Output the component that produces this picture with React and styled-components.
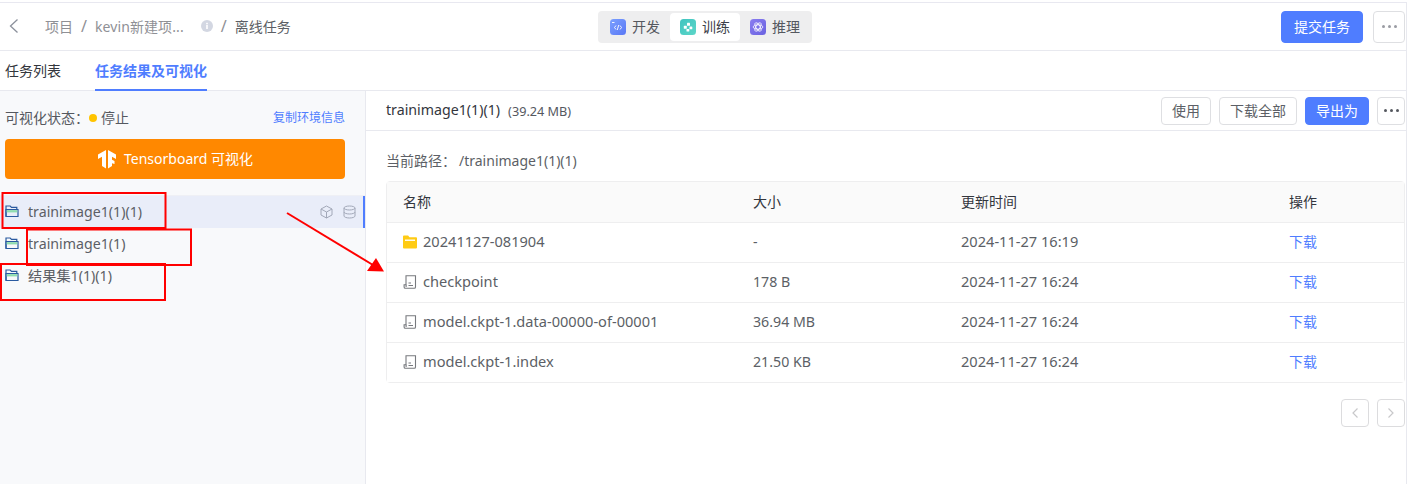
import React from "react";
import styled, { createGlobalStyle } from "styled-components";

const Global = createGlobalStyle`
  html, body { margin: 0; padding: 0; background: #fff; overflow: hidden; }
  body { font-family: "Noto Sans", "Noto Sans CJK SC", sans-serif; font-size: 14px; color: #5c5f66; }
  * { box-sizing: border-box; }
`;

const Page = styled.div`
  position: relative;
  width: 1409px;
  height: 484px;
  padding-top: 2px;
  overflow: hidden;
`;
const Frame = styled.div`
  width: 1407px;
  height: 482px;
  border-top: 1px solid #e8e8f0;
  border-right: 1px solid #e8e9ef;
  display: flex;
  flex-direction: column;
`;
const TopBar = styled.header`
  height: 48px;
  flex: none;
  border-bottom: 1px solid #e8e9ef;
  display: flex;
  align-items: center;
`;
const Crumbs = styled.nav`
  width: 598px;
  flex: none;
  display: flex;
  align-items: center;
  font-size: 14px;
  padding: 0 0 2px 8px;
`;
const BackBtn = styled.span`
  display: flex;
  width: 37px;
  color: #8c919c;
`;
const Crumb = styled.span`
  color: ${(p) => (p.$current ? "#5c5f66" : "#8f9095")};
  white-space: nowrap;
  letter-spacing: ${(p) => (p.$wide ? "0.1px" : "0")};
`;
const Sep = styled.span`
  color: #8f9095;
  margin: 0 8px;
  font-size: 16px;
  line-height: 1;
`;
const Info = styled.span`
  display: flex;
  margin-left: 17px;
`;
const Segments = styled.div`
  display: flex;
  align-items: center;
  height: 32px;
  padding: 2px;
  background: #eeeeef;
  border-radius: 4px;
  width: 214px;
  flex: none;
`;
const Segment = styled.div`
  display: flex;
  align-items: center;
  gap: 6px;
  height: 28px;
  width: 70px;
  padding: 0 0 2px 10px;
  border-radius: 4px;
  background: ${(p) => (p.$active ? "#fff" : "transparent")};
  color: ${(p) => (p.$active ? "#3c4048" : "#55585f")};
  font-size: 14px;
  white-space: nowrap;
  & > svg { position: relative; top: 1px; }
`;
const TopActions = styled.div`
  flex: 1;
  display: flex;
  justify-content: flex-end;
  align-items: center;
  gap: 10px;
  padding-right: 1px;
`;
const Btn = styled.button`
  font: inherit;
  font-size: 14px;
  height: ${(p) => (p.$h ? p.$h : 28)}px;
  padding: 0 0 2px;
  width: ${(p) => p.$w}px;
  border-radius: 4px;
  border: 1px solid ${(p) => (p.$primary ? "#4f7dff" : "#dedfe2")};
  background: ${(p) => (p.$primary ? "#4f7dff" : "#fff")};
  color: ${(p) => (p.$primary ? "#fff" : "#5c5f66")};
  display: flex;
  align-items: center;
  justify-content: center;
  white-space: nowrap;
  flex: none;
`;
const Dots = styled.span`
  display: flex;
  gap: 3px;
  position: relative;
  top: 1px;
  & > i {
    width: 3px;
    height: 3px;
    border-radius: 50%;
    background: ${(p) => p.$c};
    display: block;
  }
`;
const Tabs = styled.div`
  height: 40px;
  flex: none;
  border-bottom: 1px solid #e8e9ef;
  display: flex;
  gap: 34px;
  padding-left: 5px;
`;
const Tab = styled.div`
  height: 40px;
  line-height: 40px;
  font-size: 14px;
  font-weight: ${(p) => (p.$active ? 700 : 400)};
  color: ${(p) => (p.$active ? "#4f7dff" : "#33363d")};
  border-bottom: 2px solid ${(p) => (p.$active ? "#4f7dff" : "transparent")};
  white-space: nowrap;
`;
const Body = styled.div`
  flex: 1;
  display: flex;
  min-height: 0;
`;
const Side = styled.aside`
  width: 366px;
  flex: none;
  background: #f8f9fb;
  border-right: 1px solid #e8e9ef;
`;
const StatusRow = styled.div`
  display: flex;
  align-items: center;
  height: 48px;
  padding: 4px 20px 0 5px;
  font-size: 14px;
  color: #55585f;
`;
const Dot = styled.i`
  width: 8px;
  height: 8px;
  border-radius: 50%;
  background: #ffc400;
  margin: 1px 4px 0 0;
`;
const CopyLink = styled.span`
  margin-left: auto;
  font-size: 12px;
  color: #4f7dff;
`;
const TbButton = styled.div`
  margin: 0 20px 0 5px;
  height: 40px;
  padding-bottom: 2px;
  border-radius: 4px;
  background: #ff8800;
  color: #fff;
  font-size: 14px;
  display: flex;
  align-items: center;
  justify-content: center;
  gap: 7px;
  & > svg { position: relative; top: 1px; }
`;
const Tree = styled.div`
  margin-top: 17px;
`;
const TreeRow = styled.div`
  height: 32px;
  display: flex;
  align-items: center;
  gap: 9px;
  padding: 0 7px 2px 5px;
  font-size: 14.2px;
  background: ${(p) => (p.$active ? "#e9edf9" : "transparent")};
  border-right: 2px solid ${(p) => (p.$active ? "#4f7dff" : "transparent")};
  box-shadow: ${(p) => (p.$active ? "0 -1px 0 #eff0f5" : "none")};
  color: #5c5f66;
`;
const RowTools = styled.span`
  margin-left: auto;
  display: flex;
  gap: 10px;
  color: #a2a8b8;
  position: relative;
  top: 1px;
`;
const Main = styled.main`
  flex: 1;
  min-width: 0;
  display: flex;
  flex-direction: column;
`;
const MainHead = styled.div`
  height: 40px;
  flex: none;
  border-bottom: 1px solid #e8e9ef;
  display: flex;
  align-items: center;
  padding: 0 1px 0 20px;
`;
const Title = styled.span`
  font-size: 14.2px;
  color: #33363d;
  margin-bottom: 2px;
`;
const Size = styled.span`
  font-size: 12.700px;
  color: #55585f;
  margin: 0 0 0 8px;
`;
const HeadActions = styled.div`
  margin-left: auto;
  display: flex;
  gap: 8px;
`;
const PathLine = styled.div`
  font-size: 14px;
  color: #5c5f66;
  padding: 19px 0 0 20px;
  height: 50px;
`;
const PathValue = styled.span`
  margin-left: 3px;
`;
const Table = styled.div`
  margin: 0 1px 0 20px;
  border: 1px solid #eeeeef;
  border-radius: 4px;
`;
const TRow = styled.div`
  display: grid;
  grid-template-columns: 350px 208px 328px 1fr;
  height: 40px;
  align-items: center;
  padding: 0 0 ${(p) => (p.$head ? 2 : 3)}px 16px;
  font-size: ${(p) => (p.$head ? "14px" : "14.6px")};
  background: ${(p) => (p.$head ? "#fafafa" : "#fff")};
  color: ${(p) => (p.$head ? "#33363d" : "#5c5f66")};
  border-top: ${(p) => (p.$head ? "0" : "1px solid #eeeeef")};
`;
const NameCell = styled.span`
  display: flex;
  align-items: center;
  gap: 6px;
  white-space: nowrap;
  & > svg { position: relative; top: 1px; }
`;
const SizeCell = styled.span`
  font-size: 14.2px;
`;
const Link = styled.span`
  color: #4f7dff;
  font-size: 14px;
`;
const Pager = styled.div`
  display: flex;
  justify-content: flex-end;
  gap: 8px;
  padding: 16px 1px 0 0;
`;
const PageBtn = styled.span`
  width: 28px;
  height: 28px;
  border: 1px solid #dcdcde;
  border-radius: 4px;
  display: flex;
  align-items: center;
  justify-content: center;
  color: #c8c8ca;
`;
const Overlay = styled.svg`
  position: absolute;
  left: 0;
  top: 0;
  pointer-events: none;
`;

const FolderOpen = () => (
  <svg width="14" height="14" viewBox="0 0 14 14" fill="none">
    <path d="M1 12.500V2h4.200l1.300 1.400h5.300V5.500" stroke="#2a5aa0" strokeWidth="1.200" />
    <path d="M1 5.500h12v7H1z" stroke="#2a5aa0" strokeWidth="1.200" />
    <rect x="1.700" y="6.100" width="10.600" height="2.300" fill="#8fdcb0" />
  </svg>
);
const FolderFill = () => (
  <svg width="14" height="14" viewBox="0 0 14 14">
    <path d="M0 1.500C0 1 .4.600.9.600h4.200l1.400 1.600h6.600c.5 0 .9.400.9.900v9.400c0 .5-.4.900-.9.900H.9c-.5 0-.9-.4-.9-.9z" fill="#ffcb14" />
    <rect x="2" y="4.500" width="10" height="1.500" fill="#fff" opacity=".9" />
  </svg>
);
const FileIcon = () => (
  <svg width="14" height="14" viewBox="0 0 14 14" fill="none" stroke="#77797e" strokeWidth="1.100">
    <path d="M3 .8h9.500v11.100c0 .7-.5 1.300-1.200 1.300H2.400c-.8 0-1.300-.6-1.300-1.300V9.700H3z" />
    <path d="M3.100 9.700v2.200M5.500 10.500h4.500M5.500 8h2.500" />
  </svg>
);
const Cube = () => (
  <svg width="13" height="14" viewBox="0 0 13 14" fill="none" stroke="currentColor" strokeWidth="1">
    <path d="M6.500 1l5.500 3v6l-5.500 3L1 10V4zM1 4l5.500 3L12 4M6.500 7v6" />
  </svg>
);
const Db = () => (
  <svg width="13" height="14" viewBox="0 0 13 14" fill="none" stroke="currentColor" strokeWidth="1">
    <ellipse cx="6.500" cy="3" rx="5.500" ry="2" />
    <path d="M1 3v8c0 1.100 2.500 2 5.500 2s5.500-.9 5.500-2V3M1 7c0 1.100 2.500 2 5.500 2S12 8.100 12 7" />
  </svg>
);
const TfLogo = () => (
  <svg width="20" height="20" viewBox="0 0 20 20" fill="#fff">
    <path d="M9 1L1 5.500v4.500l4-2.300V17l4 2.500z" />
    <path d="M11 1l8 4.500v4.500l-4-2.300v3l2.500 1.400v3L15 14.200V17l-4 2.500z" />
  </svg>
);
const SegIcon = ({ from, to, kind }) => (
  <svg width="16" height="16" viewBox="0 0 16 16">
    <defs>
      <linearGradient id={`g${kind}`} x1="0" y1="0" x2="1" y2="1">
        <stop offset="0" stopColor={from} />
        <stop offset="1" stopColor={to} />
      </linearGradient>
    </defs>
    <rect width="16" height="16" rx="3.500" fill={`url(#g${kind})`} />
    {kind === "dev" && (
      <g stroke="#fff" strokeWidth=".9" fill="none">
        <path d="M2 3.500h2.500" />
        <path d="M6 6.500L4.500 8.500 6 10.500M10 6.500l1.500 2-1.500 2M8.700 6l-1.400 5" />
      </g>
    )}
    {kind === "train" && (
      <g fill="#fff">
        <rect x="7" y="3.800" width="3" height="3" rx=".6" />
        <rect x="3.800" y="6.800" width="3" height="3" rx=".6" />
        <rect x="9.500" y="7.500" width="2.800" height="2.800" rx=".6" />
        <rect x="6.500" y="10" width="2.800" height="2.500" rx=".6" />
      </g>
    )}
    {kind === "infer" && (
      <g fill="none" stroke="#fff" strokeWidth=".8">
        <ellipse cx="8" cy="8" rx="4.800" ry="2.100" />
        <ellipse cx="8" cy="8" rx="4.800" ry="2.100" transform="rotate(60 8 8)" />
        <ellipse cx="8" cy="8" rx="4.800" ry="2.100" transform="rotate(-60 8 8)" />
      </g>
    )}
  </svg>
);

const rows = [
  { n: "20241127-081904", s: "-", t: "2024-11-27 16:19", icon: <FolderFill /> },
  { n: "checkpoint", s: "178 B", t: "2024-11-27 16:24", icon: <FileIcon /> },
  { n: "model.ckpt-1.data-00000-of-00001", s: "36.94 MB", t: "2024-11-27 16:24", icon: <FileIcon /> },
  { n: "model.ckpt-1.index", s: "21.50 KB", t: "2024-11-27 16:24", icon: <FileIcon /> },
];

export default function App() {
  return (
    <Page>
      <Global />
      <Frame>
        <TopBar>
          <Crumbs>
            <BackBtn>
              <svg width="12" height="16" viewBox="0 0 12 16" fill="none" stroke="currentColor" strokeWidth="1.300">
                <path d="M9.500 1.500L2.500 8l7 6.500" />
              </svg>
            </BackBtn>
            <Crumb>项目</Crumb>
            <Sep>/</Sep>
            <Crumb $wide>kevin新建项...</Crumb>
            <Info>
              <svg width="12" height="12" viewBox="0 0 12 12">
                <circle cx="6" cy="6" r="6" fill="#d3d7e2" />
                <rect x="5.200" y="5" width="1.600" height="4" fill="#fff" />
                <rect x="5.200" y="2.800" width="1.600" height="1.500" fill="#fff" />
              </svg>
            </Info>
            <Sep>/</Sep>
            <Crumb $current>离线任务</Crumb>
          </Crumbs>
          <Segments>
            <Segment>
              <SegIcon from="#7ba0ff" to="#5a78f5" kind="dev" />
              开发
            </Segment>
            <Segment $active>
              <SegIcon from="#3fc4c0" to="#5dd6c8" kind="train" />
              训练
            </Segment>
            <Segment>
              <SegIcon from="#8a7df0" to="#6a62e0" kind="infer" />
              推理
            </Segment>
          </Segments>
          <TopActions>
            <Btn $primary $h={32} $w={82}>提交任务</Btn>
            <Btn $h={32} $w={32}>
              <Dots $c="#9a9ca3"><i /><i /><i /></Dots>
            </Btn>
          </TopActions>
        </TopBar>
        <Tabs>
          <Tab>任务列表</Tab>
          <Tab $active>任务结果及可视化</Tab>
        </Tabs>
        <Body>
          <Side>
            <StatusRow>
              可视化状态：<Dot />停止
              <CopyLink>复制环境信息</CopyLink>
            </StatusRow>
            <TbButton>
              <TfLogo />
              Tensorboard 可视化
            </TbButton>
            <Tree>
              <TreeRow $active>
                <FolderOpen />
                trainimage1(1)(1)
                <RowTools><Cube /><Db /></RowTools>
              </TreeRow>
              <TreeRow>
                <FolderOpen />
                trainimage1(1)
              </TreeRow>
              <TreeRow>
                <FolderOpen />
                结果集1(1)(1)
              </TreeRow>
            </Tree>
          </Side>
          <Main>
            <MainHead>
              <Title>trainimage1(1)(1)</Title>
              <Size>(39.24 MB)</Size>
              <HeadActions>
                <Btn $w={50}>使用</Btn>
                <Btn $w={78}>下载全部</Btn>
                <Btn $primary $w={64}>导出为</Btn>
                <Btn $w={28}>
                  <Dots $c="#55585f"><i /><i /><i /></Dots>
                </Btn>
              </HeadActions>
            </MainHead>
            <PathLine>当前路径：<PathValue>/trainimage1(1)(1)</PathValue></PathLine>
            <Table>
              <TRow $head>
                <span>名称</span><span>大小</span><span>更新时间</span><span>操作</span>
              </TRow>
              {rows.map((r) => (
                <TRow key={r.n}>
                  <NameCell>{r.icon}{r.n}</NameCell>
                  <SizeCell>{r.s}</SizeCell>
                  <span>{r.t}</span>
                  <Link>下载</Link>
                </TRow>
              ))}
            </Table>
            <Pager>
              <PageBtn>
                <svg width="8" height="12" viewBox="0 0 8 12" fill="none" stroke="currentColor" strokeWidth="1.200"><path d="M6.500 1.500L2 6l4.500 4.500" /></svg>
              </PageBtn>
              <PageBtn>
                <svg width="8" height="12" viewBox="0 0 8 12" fill="none" stroke="currentColor" strokeWidth="1.200"><path d="M1.500 1.500L6 6l-4.500 4.500" /></svg>
              </PageBtn>
            </Pager>
          </Main>
        </Body>
      </Frame>
      <Overlay width="1409" height="484" viewBox="0 0 1409 484">
        <g fill="none" stroke="#f00" strokeWidth="2">
          <rect x="2.500" y="193" width="163" height="35" />
          <rect x="27" y="229.500" width="164" height="35.500" />
          <rect x="1" y="264" width="164" height="36" />
        </g>
        <path d="M287 213L373 265" stroke="#f00" strokeWidth="2" />
        <path d="M384 271.500L367 271L376 258z" fill="#f00" />
      </Overlay>
    </Page>
  );
}
